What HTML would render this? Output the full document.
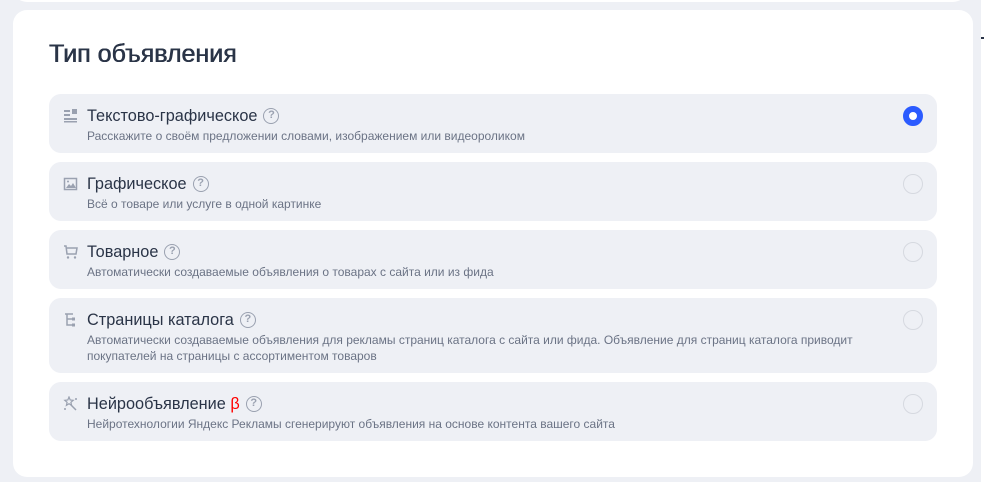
<!DOCTYPE html>
<html><head><meta charset="utf-8"><style>
body{margin:0;width:984px;height:482px;background:#fff;font-family:"Liberation Sans","DejaVu Sans",sans-serif;position:relative;overflow:hidden}
.bg{position:absolute;left:0;top:0;width:981px;height:482px;background:#eef0f5}
.top{position:absolute;left:13px;top:-20px;width:954px;height:22px;background:#fff;border-radius:0 0 14px 14px}
.card{position:absolute;left:13px;top:10px;width:960px;height:467px;background:#fff;border-radius:14px}
h1{position:absolute;left:49px;top:40px;margin:0;font-size:25px;font-weight:normal;color:#2a3447;letter-spacing:0px;text-shadow:0.4px 0 0 #2a3447,-0.2px 0 0 #2a3447}
.it{position:absolute;left:49px;width:888px;background:#eef0f5;border-radius:12px}
.t{position:absolute;left:38px;top:12px;font-size:16.3px;color:#2a3447;white-space:nowrap;line-height:20px}
.d{position:absolute;left:38px;top:34px;font-size:12px;color:#6b7385;line-height:16px;width:800px}
.q{display:inline-block;width:16px;height:16px;border:1.5px solid #9aa1b0;border-radius:50%;font-size:11px;text-align:center;color:#9aa1b0;margin-left:6px;box-sizing:border-box;line-height:13px;font-weight:bold;position:relative;top:-1px;vertical-align:middle}
.r{position:absolute;left:854px;top:12px;width:20px;height:20px;border:1px solid #d6d9e0;border-radius:50%;box-sizing:border-box}
.r.on{border:6px solid #2b5bff;background:#fff}
.ic{position:absolute;left:14px;top:14px}
</style></head><body>
<div class="bg"></div>
<div class="top"></div>
<div style="position:absolute;left:981px;top:37px;width:3px;height:2px;background:#2a3447"></div>
<div class="card"></div>
<h1>Тип объявления</h1>

<div class="it" style="top:94px;height:59px">
<svg class="ic" width="16" height="16"><g fill="#9aa1b0"><rect x="1" y="2" width="6" height="2"/><rect x="9" y="1" width="5" height="5"/><rect x="1" y="6" width="6" height="2"/><rect x="1" y="10" width="13" height="2"/><rect x="1" y="13" width="13" height="1.5"/></g></svg>
<div class="t">Текстово-графическое<span class="q">?</span></div>
<div class="d">Расскажите о своём предложении словами, изображением или видеороликом</div>
<div class="r on"></div></div>

<div class="it" style="top:162px;height:59px">
<svg class="ic" width="16" height="16"><rect x="1.5" y="2.5" width="12" height="11" fill="none" stroke="#9aa1b0" stroke-width="1.5"/><path d="M3 12l3-4 2 2 2-3 3 5z" fill="#9aa1b0"/><circle cx="5" cy="5.5" r="1" fill="#9aa1b0"/></svg>
<div class="t">Графическое<span class="q">?</span></div>
<div class="d">Всё о товаре или услуге в одной картинке</div>
<div class="r"></div></div>

<div class="it" style="top:230px;height:59px">
<svg class="ic" width="16" height="16"><path d="M1 2h2l1 8h9l1-6H4" fill="none" stroke="#9aa1b0" stroke-width="1.5"/><circle cx="5" cy="13.5" r="1.2" fill="#9aa1b0"/><circle cx="12" cy="13.5" r="1.2" fill="#9aa1b0"/></svg>
<div class="t">Товарное<span class="q">?</span></div>
<div class="d">Автоматически создаваемые объявления о товарах с сайта или из фида</div>
<div class="r"></div></div>

<div class="it" style="top:298px;height:75px">
<svg class="ic" width="16" height="16"><path d="M2 2h8M4 2v11h5M4 7h5" fill="none" stroke="#9aa1b0" stroke-width="1.5"/><rect x="9" y="5.5" width="3" height="3" fill="#9aa1b0"/><rect x="9" y="11.5" width="3" height="3" fill="#9aa1b0"/></svg>
<div class="t">Страницы каталога<span class="q">?</span></div>
<div class="d">Автоматически создаваемые объявления для рекламы страниц каталога с сайта или фида. Объявление для страниц каталога приводит покупателей на страницы с ассортиментом товаров</div>
<div class="r"></div></div>

<div class="it" style="top:382px;height:59px">
<svg class="ic" width="16" height="16"><path d="M6 1l1.2 3 3 .3-2.3 2 .7 3-2.6-1.6L3.4 9.3l.7-3-2.3-2 3-.3z" fill="none" stroke="#9aa1b0" stroke-width="1.2"/><path d="M8 9l5 5" stroke="#9aa1b0" stroke-width="1.5"/><circle cx="13" cy="3" r="1" fill="#9aa1b0"/><circle cx="2" cy="13" r="1" fill="#9aa1b0"/></svg>
<div class="t">Нейрообъявление <span style="color:#f00">β</span><span class="q">?</span></div>
<div class="d">Нейротехнологии Яндекс Рекламы сгенерируют объявления на основе контента вашего сайта</div>
<div class="r"></div></div>
</body></html>
